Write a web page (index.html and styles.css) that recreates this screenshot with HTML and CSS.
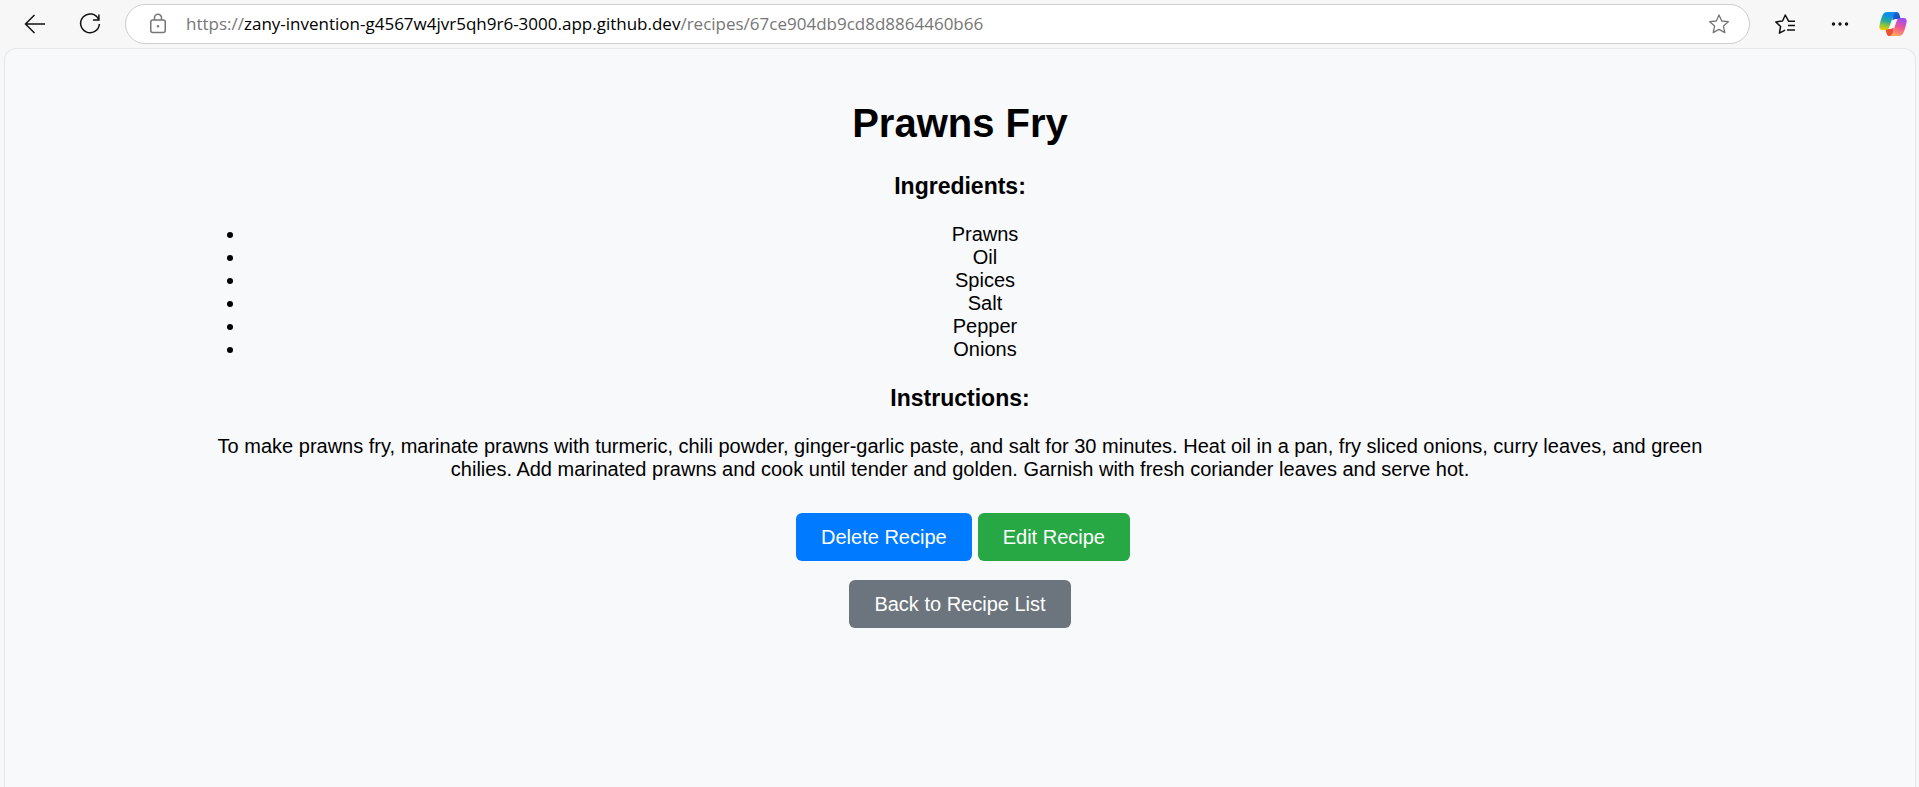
FILE: index.html
```html
<!DOCTYPE html>
<html lang="en">
<head>
<meta charset="utf-8">
<meta name="viewport" content="width=device-width, initial-scale=1">
<title>Prawns Fry</title>
<link rel="stylesheet" href="styles.css">
</head>
<body>
<header class="toolbar">
  <button class="tool" type="button" aria-label="Back">
    <svg width="24" height="24" viewBox="0 0 24 24" fill="none" stroke="currentColor" stroke-width="1.5"><path d="M22 12H2.500M11.500 3L2.500 12l9 9"/></svg>
  </button>
  <button class="tool" type="button" aria-label="Refresh">
    <svg width="24" height="24" viewBox="0 0 24 24" fill="none" stroke="currentColor" stroke-width="1.500"><path d="M20.600 7.500A9.400 9.400 0 1 0 21.400 12M20.900 2.500v5.500H15"/></svg>
  </button>
  <div class="address">
    <button class="site-info" type="button" aria-label="View site information">
      <svg width="18" height="22" viewBox="0 0 18 22" fill="none" stroke="currentColor" stroke-width="1.500"><rect x="1.750" y="7" width="14.500" height="12.500" rx="2"/><path d="M5.500 7V4.800a3.500 3.500 0 0 1 7 0V7"/><circle cx="9" cy="13.300" r="1.200" fill="currentColor" stroke="none"/></svg>
    </button>
    <div class="url" role="textbox" contenteditable="true" spellcheck="false" aria-label="Address">https://<span class="host">zany-invention-g4567w4jvr5qh9r6-3000.app.github.dev</span>/recipes/67ce904db9cd8d8864460b66</div>
    <button class="favorite" type="button" aria-label="Add this page to favorites">
      <svg width="22" height="22" viewBox="0 0 22 22" fill="none" stroke="currentColor" stroke-width="1.300" stroke-linejoin="round"><path d="M11 2l2.700 6 6.600.700-4.900 4.400 1.400 6.500L11 16.400l-5.800 3.200 1.400-6.500L1.700 8.700l6.600-.700z"/></svg>
    </button>
  </div>
  <button class="tool" type="button" aria-label="Favorites">
    <svg width="24" height="24" viewBox="0 0 24 24" fill="none" stroke="currentColor" stroke-width="1.500" stroke-linejoin="round"><path d="M22 9.300h-6.300L12.300 3 9.500 9l-6.700.900 4.800 4.600-1.200 6.600 5.700-2.900M15 13.600h7M14 18h8"/></svg>
  </button>
  <button class="tool" type="button" aria-label="Settings and more">
    <svg width="20" height="24" viewBox="0 0 20 24" fill="currentColor"><circle cx="3.500" cy="12" r="1.700"/><circle cx="10" cy="12" r="1.700"/><circle cx="16.500" cy="12" r="1.700"/></svg>
  </button>
  <button class="tool copilot" type="button" aria-label="Copilot">
    <svg width="28" height="26" viewBox="0 0 28 26">
      <defs>
        <linearGradient id="cool" x1="0.500" y1="0" x2="0.300" y2="1"><stop offset="0.150" stop-color="#0d8ee9"/><stop offset="0.500" stop-color="#28a9a0"/><stop offset="0.750" stop-color="#8cc63f"/><stop offset="1" stop-color="#f4c800"/></linearGradient>
        <linearGradient id="warm" x1="0.700" y1="0" x2="0.350" y2="1"><stop offset="0.050" stop-color="#a04df0"/><stop offset="0.500" stop-color="#f0588f"/><stop offset="1" stop-color="#ffa75c"/></linearGradient>
        <linearGradient id="blue" x1="0" y1="0" x2="1" y2="1"><stop offset="0" stop-color="#1b70e0"/><stop offset="1" stop-color="#1b45b8"/></linearGradient>
      </defs>
      <path d="M13 1h4.500c1.700 0 2.400 1 2.900 2.600L21.700 8H18c-1.700 0-3.300.3-4.500 1.500z" fill="url(#blue)"/>
      <path d="M15 25h-4.500c-1.700 0-2.400-1-2.900-2.600L6.300 18H10c1.700 0 3.300-.3 4.500-1.500z" fill="#ee5136"/>
      <path d="M8.200 1h9.300c-1.900.3-2.700 1.900-3.300 3.800L10.500 15.500C9.600 18 8.700 19 6.700 19H3.300C.9 19-.1 17.300.5 14.500c.7-3.600 1.800-7.300 3.200-10.500C4.600 2 6 1 8.200 1z" fill="url(#cool)"/>
      <path d="M19.800 25h-9.300c1.900-.3 2.700-1.900 3.300-3.800L17.500 10.500C18.400 8 19.300 7 21.300 7h3.400c2.400 0 3.400 1.700 2.800 4.500-.7 3.600-1.800 7.300-3.200 10.500-.9 2-2.300 3-4.500 3z" fill="url(#warm)"/>
    </svg>
  </button>
</header>
<main class="page">
  <article class="recipe">
    <h1 class="title">Prawns Fry</h1>
    <h3 class="section">Ingredients:</h3>
    <ul class="ingredients">
      <li>Prawns</li>
      <li>Oil</li>
      <li>Spices</li>
      <li>Salt</li>
      <li>Pepper</li>
      <li>Onions</li>
    </ul>
    <h3 class="section">Instructions:</h3>
    <p class="instructions">To make prawns fry, marinate prawns with turmeric, chili powder, ginger-garlic paste, and salt for 30 minutes. Heat oil in a pan, fry sliced onions, curry leaves, and green chilies. Add marinated prawns and cook until tender and golden. Garnish with fresh coriander leaves and serve hot.</p>
    <div class="actions">
      <button class="btn btn-delete" type="button">Delete Recipe</button>
      <a class="btn btn-edit" href="#edit">Edit Recipe</a>
    </div>
    <a class="btn btn-back" href="#recipes">Back to Recipe List</a>
  </article>
</main>
</body>
</html>
```
FILE: styles.css
```css
* {
  box-sizing: border-box;
}

body {
  margin: 0;
  min-height: 100vh;
  display: flex;
  flex-direction: column;
  background: #f7f7f7;
  color: #000;
  font-family: "Liberation Sans", Arial, sans-serif;
  font-size: 20px;
  line-height: 23px;
}

button {
  margin: 0;
  border: 0;
  padding: 0;
  background: none;
  color: inherit;
  font: inherit;
  cursor: pointer;
}

svg {
  display: block;
}

.toolbar {
  display: flex;
  align-items: center;
  height: 48px;
  padding: 0 12px 0 7px;
}

.tool {
  display: flex;
  align-items: center;
  justify-content: center;
  flex: none;
  width: 55px;
  height: 40px;
  color: #111;
}

.copilot {
  width: 28px;
  margin-left: 12px;
}

.address {
  display: flex;
  align-items: center;
  flex: 1;
  min-width: 0;
  height: 40px;
  margin: 0 7px 0 8px;
  padding: 0 19px 0 23px;
  border: 1px solid #cdcdcd;
  border-radius: 20px;
  background: #fff;
}

.site-info,
.favorite {
  flex: none;
  color: #767676;
}

.url {
  flex: 1;
  min-width: 0;
  margin-left: 19px;
  overflow: hidden;
  white-space: nowrap;
  outline: 0;
  color: #767676;
  font-family: "Open Sans", "Noto Sans", sans-serif;
  font-size: 17px;
  line-height: 26px;
}

.host {
  color: #000;
}

.page {
  flex: 1;
  margin: 0 3px 0 4px;
  border: 1px solid #e6e7e8;
  border-bottom: 0;
  border-radius: 12px 12px 0 0;
  background: #f8f9fb;
}

.recipe {
  width: 80%;
  margin: 0 auto;
  padding-top: 51px;
  text-align: center;
}

.title {
  margin: 0 0 27px;
  font-size: 40px;
  line-height: 46px;
}

.section {
  margin: 0 0 24px;
  font-size: 23px;
  line-height: 26px;
}

.ingredients {
  margin: 0 0 24px;
  padding-left: 50px;
}

.instructions {
  margin: 0 0 32px;
}

.actions {
  display: flex;
  justify-content: center;
  gap: 6px;
  margin-bottom: 19px;
  padding-left: 6px;
}

.btn {
  display: inline-block;
  padding: 13px 25px 12px;
  border-radius: 6px;
  color: #fff;
  text-decoration: none;
}

.btn-delete {
  background: #007bff;
}

.btn-edit {
  background: #28a745;
}

.btn-back {
  background: #6c757d;
}
```
